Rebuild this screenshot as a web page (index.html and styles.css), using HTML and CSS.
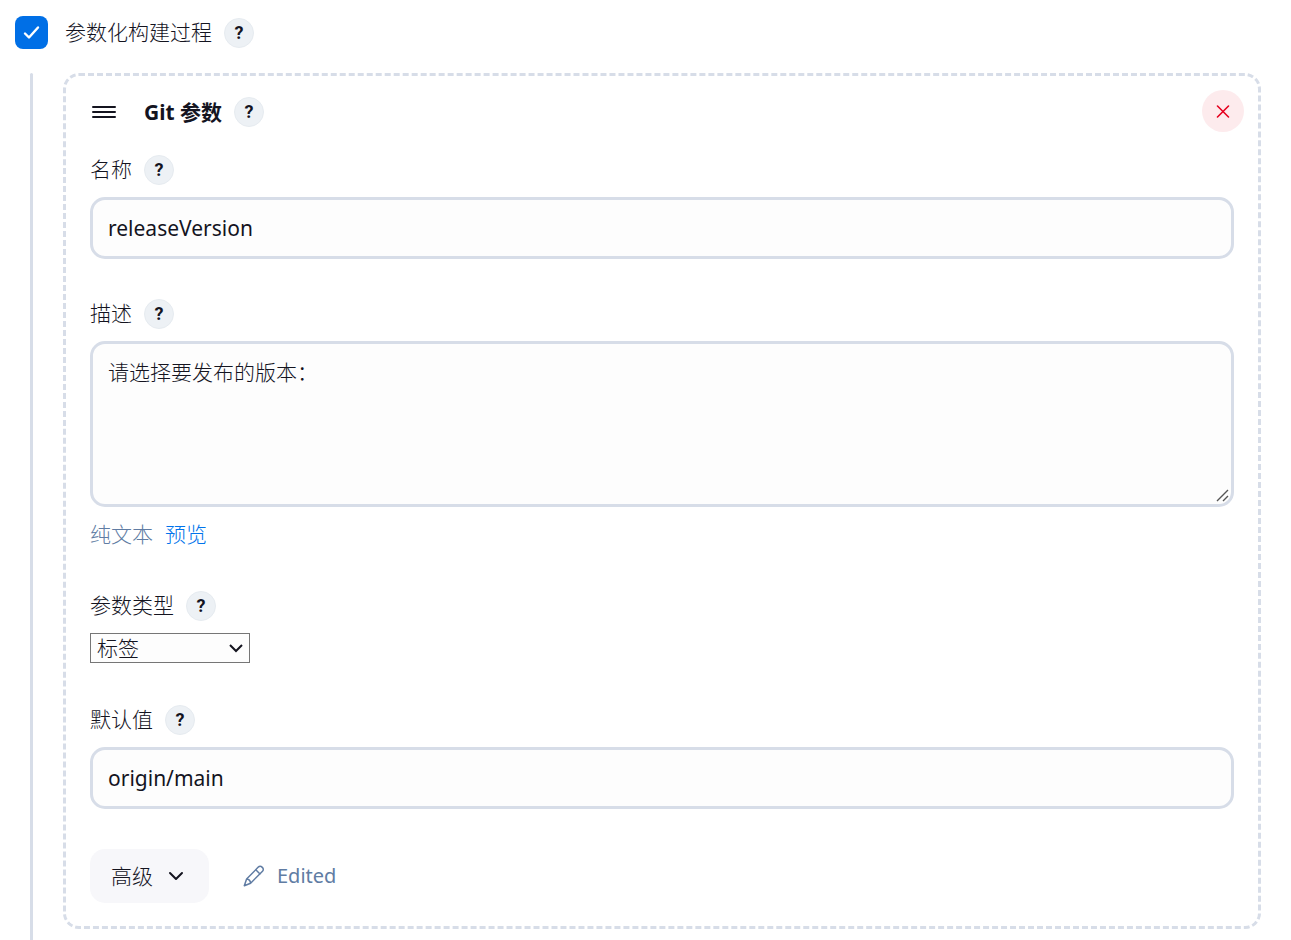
FILE: index.html
```
<!DOCTYPE html>
<html lang="zh-CN">
<head>
<meta charset="UTF-8">
<meta name="viewport" content="width=device-width, initial-scale=1.0">
<title>参数化构建过程</title>
<link rel="stylesheet" href="styles.css">
</head>
<body>
    <form class="config">
        <div class="option">
            <input type="checkbox" id="parameterized" class="checkbox" checked>
            <label for="parameterized">参数化构建过程</label>
            <button type="button" class="help">?</button>
        </div>
        <div class="nested">
            <div class="nested-line"></div>
            <div class="chunk">
                <div class="chunk-header">
                    <svg class="handle" viewBox="0 0 24 14" width="24" height="14" fill="none" stroke="currentColor" stroke-width="2" stroke-linecap="round">
                        <path d="M1 2h22M1 7h22M1 12h22"/>
                    </svg>
                    <h2>Git 参数</h2>
                    <button type="button" class="help">?</button>
                    <button type="button" class="delete" aria-label="删除">
                        <svg viewBox="0 0 14 14" width="14" height="14" fill="none" stroke="currentColor" stroke-width="1.6" stroke-linecap="round">
                            <path d="M1.5 2l11 11M12.5 2l-11 11"/>
                        </svg>
                    </button>
                </div>
                <div class="field">
                    <div class="field-label">
                        <label for="name">名称</label>
                        <button type="button" class="help">?</button>
                    </div>
                    <input type="text" id="name" name="name" class="input" value="releaseVersion">
                </div>
                <div class="field">
                    <div class="field-label">
                        <label for="description">描述</label>
                        <button type="button" class="help">?</button>
                    </div>
                    <textarea id="description" name="description" class="input textarea">请选择要发布的版本：</textarea>
                    <div class="preview">
                        <span>纯文本</span>
                        <a href="#">预览</a>
                    </div>
                </div>
                <div class="field">
                    <div class="field-label">
                        <label for="type">参数类型</label>
                        <button type="button" class="help">?</button>
                    </div>
                    <div class="select">
                        <select id="type" name="type">
                            <option>标签</option>
                        </select>
                        <svg viewBox="0 0 14 9" width="14" height="9" fill="none" stroke="currentColor" stroke-width="2">
                            <path d="M1 1l6 6 6-6"/>
                        </svg>
                    </div>
                </div>
                <div class="field">
                    <div class="field-label">
                        <label for="defaultValue">默认值</label>
                        <button type="button" class="help">?</button>
                    </div>
                    <input type="text" id="defaultValue" name="defaultValue" class="input" value="origin/main">
                </div>
                <div class="advanced">
                    <button type="button" class="advanced-button">
                        高级
                        <svg viewBox="0 0 16 10" width="16" height="10" fill="none" stroke="currentColor" stroke-width="2" stroke-linecap="round" stroke-linejoin="round">
                            <path d="M2 2l6 6 6-6"/>
                        </svg>
                    </button>
                    <span class="edited">
                        <svg viewBox="0 0 22 22" width="22" height="22" fill="none" stroke="currentColor" stroke-width="1.5" stroke-linecap="round" stroke-linejoin="round">
                            <path d="M15.3 2.1a2.6 2.6 0 0 1 3.7 0l.5.5a2.6 2.6 0 0 1 0 3.7L7.6 18.2 1.3 20.7l2.3-6.6zM12.8 4.8l4.2 4.2M3.6 14.1c2.3.2 3.7 1.7 4 4.1"/>
                        </svg>
                        Edited
                    </span>
                </div>
            </div>
        </div>
    </form>
</body>
</html>
```
FILE: styles.css
```
* {
    box-sizing: border-box;
}
body {
    margin: 0;
    background-color: #fff;
    color: #14141f;
    font-family: "Noto Sans", "Noto Sans CJK SC", sans-serif;
    font-size: 21px;
    line-height: 32px;
}
button,
input,
select,
textarea {
    margin: 0;
    font: inherit;
    color: inherit;
}
label,
.textarea,
.preview,
select,
.advanced-button {
    font-weight: 300;
}
label {
    padding-bottom: 2px;
}
svg {
    display: block;
    flex: none;
}
.config {
    display: flex;
    flex-direction: column;
    min-height: 100vh;
    padding: 16px 30px 0 15px;
}
.option {
    display: flex;
    align-items: center;
    height: 33px;
    margin-bottom: 24px;
}
.checkbox {
    appearance: none;
    width: 33px;
    height: 33px;
    margin-right: 17px;
    border-radius: 8px;
    background: #006fe6 url("data:image/svg+xml,%3Csvg xmlns='http://www.w3.org/2000/svg' viewBox='0 0 33 33' fill='none' stroke='white' stroke-width='2.4' stroke-linecap='round' stroke-linejoin='round'%3E%3Cpath d='M10 17.5l4 4 9-10'/%3E%3C/svg%3E");
}
.help {
    width: 30px;
    height: 30px;
    margin-left: 12px;
    padding: 0;
    border: 1px solid #e6ebf0;
    border-radius: 50%;
    background-color: #edf1f5;
    font-family: Roboto, sans-serif;
    font-size: 18px;
    font-weight: 700;
    line-height: 28px;
    cursor: pointer;
}
.nested {
    display: flex;
    flex: 1;
    gap: 30px;
    padding-left: 15px;
}
.nested-line {
    width: 3px;
    border-radius: 3px 3px 0 0;
    background-color: #d7dde8;
}
.chunk {
    flex: 1;
    margin-bottom: 11px;
    padding: 14px 24px 23px;
    border: 3px dashed #d7dde8;
    border-radius: 16px;
}
.chunk-header {
    display: flex;
    align-items: center;
    height: 44px;
    margin-bottom: 21px;
}
.handle {
    margin: 0 28px 0 2px;
}
h2 {
    margin: 0;
    font-size: 21px;
    font-weight: 700;
}
.delete {
    display: grid;
    place-items: center;
    align-self: flex-start;
    width: 42px;
    height: 42px;
    margin: 0 -10px 0 auto;
    padding: 0;
    border: none;
    border-radius: 50%;
    background-color: #fdebed;
    color: #e6001f;
    cursor: pointer;
}
.field {
    margin-bottom: 40px;
}
.field-label {
    display: flex;
    align-items: center;
    height: 30px;
    margin-bottom: 12px;
}
.input {
    display: block;
    width: 100%;
    height: 62px;
    padding: 12px 15px;
    border: 3px solid #d7dde8;
    border-radius: 15px;
    background-color: #fdfdfd;
}
.textarea {
    height: 166px;
    resize: vertical;
}
.textarea::-webkit-resizer {
    background: url("data:image/svg+xml,%3Csvg xmlns='http://www.w3.org/2000/svg' viewBox='0 0 15 15' fill='none' stroke='%23555' stroke-width='1.4'%3E%3Cpath d='M1 12L12 1M7 12l5-5'/%3E%3C/svg%3E");
}
.preview {
    display: flex;
    gap: 12px;
    margin-top: 11px;
    margin-bottom: 41px;
    color: #607ca3;
}
.preview a {
    color: #0073eb;
    text-decoration: none;
}
.select {
    display: grid;
    width: 160px;
    height: 32px;
    align-items: start;
}
.select select {
    grid-area: 1 / 1;
    appearance: none;
    height: 30px;
    padding: 0 6px;
    border: 1px solid #767676;
    border-radius: 0;
    background-color: #fdfdfd;
    line-height: 28px;
}
.select svg {
    grid-area: 1 / 1;
    justify-self: end;
    margin: 11px 7px 0 0;
    pointer-events: none;
}
.advanced {
    display: flex;
    align-items: center;
    gap: 34px;
}
.advanced-button {
    display: flex;
    align-items: center;
    gap: 15px;
    height: 54px;
    padding: 0 25px 0 21px;
    border: none;
    border-radius: 15px;
    background-color: #f7f7fa;
    cursor: pointer;
}
.edited {
    display: flex;
    align-items: center;
    gap: 12px;
    color: #607ca3;
    font-size: 20px;
}
```
